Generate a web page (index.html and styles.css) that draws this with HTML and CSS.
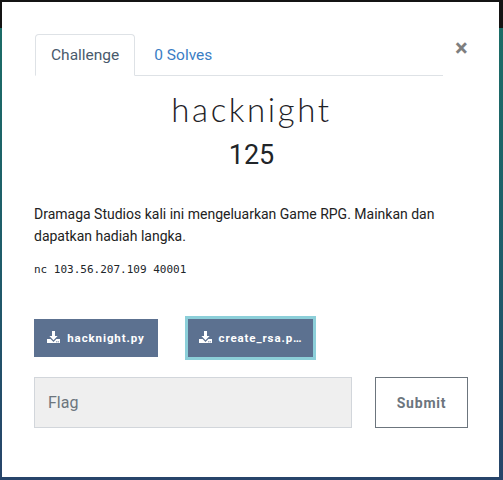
FILE: index.html
```html
<!DOCTYPE html>
<html>
<head>
<meta charset="utf-8">
<link rel="stylesheet" href="styles.css">
</head>
<body>
<div class="modal">
  <div class="head">
    <ul class="tabs">
      <li class="tab active">Challenge</li>
      <li class="tab link">0 Solves</li>
    </ul>
    <span class="close">&times;</span>
  </div>
  <h2 class="title">hacknight</h2>
  <h3 class="value">125</h3>
  <p class="desc">Dramaga Studios kali ini mengeluarkan Game RPG. Mainkan dan dapatkan hadiah langka.</p>
  <p class="cmd">nc 103.56.207.109 40001</p>
  <div class="files">
    <a class="file">
      <svg class="dl" viewBox="0 0 13 12" width="13" height="12"><path d="M5 0h3v5h2.6L6.5 9.2 2.4 5H5z" fill="#fff"/><path d="M0 8h3.6l2.9 2.9L9.4 8H13v4H0z" fill="#fff"/><rect x="9.2" y="10.3" width="1" height="1" fill="#5c7190"/><rect x="10.8" y="10.3" width="1" height="1" fill="#5c7190"/></svg>
      <span>hacknight.py</span>
    </a>
    <a class="file focus">
      <svg class="dl" viewBox="0 0 13 12" width="13" height="12"><path d="M5 0h3v5h2.6L6.5 9.2 2.4 5H5z" fill="#fff"/><path d="M0 8h3.6l2.9 2.9L9.4 8H13v4H0z" fill="#fff"/><rect x="9.2" y="10.3" width="1" height="1" fill="#5c7190"/><rect x="10.8" y="10.3" width="1" height="1" fill="#5c7190"/></svg>
      <span>create_rsa.p…</span>
    </a>
  </div>
  <div class="submit-row">
    <input class="flag" type="text" placeholder="Flag">
    <button class="submit">Submit</button>
  </div>
</div>
</body>
</html>
```

FILE: styles.css
```css
html, body {
  margin: 0;
  height: 100%;
}
body {
  width: 503px;
  height: 480px;
  box-sizing: border-box;
  padding: 2px 4px 3px 2px;
  background:
    linear-gradient(#141414 0, #141414 28px, transparent 28px),
    linear-gradient(#1b6e66 0%, #1f5c6a 55%, #27446a 100%);
  overflow: hidden;
  font-family: Roboto, "Liberation Sans", sans-serif;
}
.modal {
  background: #fff;
  height: 475px;
  box-sizing: border-box;
  padding: 32px 30px 0 32px;
  color: #212529;
}
.head {
  display: flex;
  align-items: flex-start;
}
.tabs {
  list-style: none;
  margin: 0 0 0 1px;
  padding: 0;
  display: flex;
  flex: 1;
  border-bottom: 1px solid #dee2e6;
  margin-right: 12px;
}
.tab {
  font-size: 15.5px;
  line-height: 22px;
  padding: 9px 15px 9px 15px;
  border: 1px solid transparent;
  border-top-left-radius: 4px;
  border-top-right-radius: 4px;
  margin-bottom: -1px;
}
.tab.active {
  color: #495a6c;
  border-color: #dee2e6 #dee2e6 #fff;
  background: #fff;
}
.tab.link {
  color: #3b7dc4;
  padding-left: 18px;
}
.close {
  font-size: 24px;
  font-weight: 700;
  line-height: 1;
  color: #000;
  opacity: 0.5;
  margin-top: 2px;
  width: 14px;
}
.title {
  margin: 14px 0 0;
  text-align: center;
  font-family: Lato, sans-serif;
  font-weight: 300;
  font-size: 33px;
  line-height: 38px;
  letter-spacing: 2.6px;
  color: #1e2226;
}
.value {
  margin: 11px 0 0;
  text-align: center;
  font-weight: 400;
  font-size: 27px;
  line-height: 32px;
  color: #212529;
}
.desc {
  margin: 32px 0 0;
  font-size: 14px;
  line-height: 22px;
  color: #222;
}
.cmd {
  margin: 15px 0 0;
  font-family: "DejaVu Sans Mono", monospace;
  font-size: 11px;
  line-height: 16px;
  color: #212529;
}
.files {
  display: flex;
  gap: 30px;
  margin-top: 41px;
}
.file {
  display: flex;
  align-items: center;
  justify-content: center;
  gap: 7px;
  height: 38px;
  background: #5c7190;
  color: #fff;
  font-size: 11.5px;
  font-weight: 700;
  letter-spacing: 0.9px;
}
.file:first-child {
  width: 124px;
}
.file.focus {
  width: 125px;
  box-shadow: 0 0 0 3px #8ccfd9;
}
.dl {
  display: block;
  margin-top: -2px;
}
.submit-row {
  display: flex;
  gap: 23px;
  margin-top: 20px;
}
.flag {
  width: 318px;
  height: 51px;
  box-sizing: border-box;
  background: #efefef;
  border: 1px solid #d2d6db;
  padding: 0 13px;
  font-family: Roboto, sans-serif;
  font-size: 16px;
  color: #495057;
}
.flag::placeholder {
  color: #6c757d;
}
.submit {
  width: 93px;
  height: 51px;
  box-sizing: border-box;
  background: #fff;
  border: 1px solid #6c757d;
  font-family: Roboto, sans-serif;
  font-weight: 700;
  font-size: 14px;
  letter-spacing: 0.8px;
  color: #6c757d;
  padding: 0;
}
```
